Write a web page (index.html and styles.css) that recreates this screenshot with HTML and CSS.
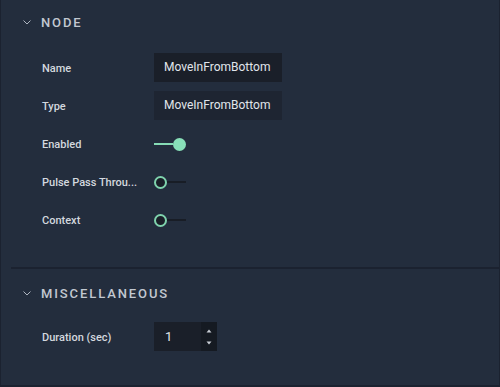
FILE: index.html
```html
<!DOCTYPE html>
<html lang="en">
<head>
    <meta charset="UTF-8">
    <meta name="viewport" content="width=device-width, initial-scale=1.0">
    <title>Node properties</title>
    <link rel="stylesheet" href="styles.css">
</head>
<body>

<div class="panel">

    <!-- Node section -->
    <section class="section node-section">
        <div class="section-header">
            <svg class="chevron" width="8" height="5" viewBox="0 0 8 5"><path d="M0.5 0.5 L4 4 L7.5 0.5" fill="none" stroke="#aeb5c0" stroke-width="1"/></svg>
            <span class="section-title">NODE</span>
        </div>

        <div class="row">
            <label class="row-label">Name</label>
            <div class="text-field">MoveInFromBottom</div>
        </div>

        <div class="row">
            <label class="row-label">Type</label>
            <div class="text-field readonly">MoveInFromBottom</div>
        </div>

        <div class="row">
            <label class="row-label">Enabled</label>
            <div class="toggle on"><span class="track"></span><span class="knob"></span></div>
        </div>

        <div class="row">
            <label class="row-label">Pulse Pass Throu...</label>
            <div class="toggle"><span class="knob"></span><span class="track"></span></div>
        </div>

        <div class="row">
            <label class="row-label">Context</label>
            <div class="toggle"><span class="knob"></span><span class="track"></span></div>
        </div>
    </section>

    <!-- Miscellaneous section -->
    <section class="section misc-section">
        <div class="section-header">
            <svg class="chevron" width="8" height="5" viewBox="0 0 8 5"><path d="M0.5 0.5 L4 4 L7.5 0.5" fill="none" stroke="#aeb5c0" stroke-width="1"/></svg>
            <span class="section-title">MISCELLANEOUS</span>
        </div>

        <div class="row">
            <label class="row-label">Duration (sec)</label>
            <div class="number-field">
                <span class="number-value">1</span>
                <div class="spinner">
                    <svg width="6" height="4" viewBox="0 0 6 4"><path d="M0.5 3.5 L3 0.5 L5.5 3.5 Z" fill="#c9ced6"/></svg>
                    <svg width="6" height="4" viewBox="0 0 6 4"><path d="M0.5 0.5 L3 3.5 L5.5 0.5 Z" fill="#c9ced6"/></svg>
                </div>
            </div>
        </div>
    </section>

</div>

</body>
</html>
```

FILE: styles.css
```css
/* General Styling */
body {
    margin: 0;
    padding: 0;
    background-color: #232d3d;
    font-family: Roboto, "Noto Sans", sans-serif;
    color: #d3d8df;
}

/* Panel */
.panel {
    height: 387px;
    box-sizing: border-box;
    border-left: 1px solid #1b2230;
    border-right: 1px solid #1b2230;
    border-bottom: 2px solid #1b2230;
}

/* Sections */
.node-section {
    padding: 12px 0 24px;
    border-bottom: 2px solid #1b2230;
    margin-left: 10px;
}

.node-section .section-header {
    margin-left: -10px;
}

.misc-section {
    padding-top: 14px;
}

.section-header {
    display: flex;
    align-items: center;
    height: 20px;
    padding-left: 22px;
    margin-bottom: 21px;
}

.misc-section .section-header {
    margin-bottom: 19px;
}

.chevron {
    margin-right: 10px;
}

.section-title {
    font-size: 13px;
    font-weight: 500;
    letter-spacing: 1.9px;
    color: #c2c8d1;
}

/* Rows */
.row {
    display: flex;
    align-items: center;
    height: 29px;
    margin-bottom: 9px;
    padding-left: 41px;
}

.node-section .row {
    padding-left: 31px;
}

.row-label {
    width: 112px;
    padding-top: 2px;
    font-size: 11px;
    font-weight: 500;
    color: #d3d8df;
    white-space: nowrap;
}

/* Text fields */
.text-field {
    width: 128px;
    height: 29px;
    box-sizing: border-box;
    padding-left: 10px;
    background: #1a1f29;
    font-size: 12px;
    line-height: 29px;
    color: #e1e5eb;
    white-space: nowrap;
    overflow: hidden;
}

.text-field.readonly {
    background: #1e2532;
}

/* Toggles */
.toggle {
    display: flex;
    align-items: center;
    width: 32px;
    height: 16px;
    padding-top: 1px;
}

.toggle .track {
    flex: 1;
    height: 2px;
    background: #181d26;
}

.toggle .knob {
    width: 9px;
    height: 9px;
    border: 2px solid #7fd3ad;
    border-radius: 50%;
    background: #1a1f28;
}

.toggle.on .track {
    background: #86dcb6;
}

.toggle.on .knob {
    width: 13px;
    height: 13px;
    border: none;
    background: #88e0b9;
}

/* Number field */
.number-field {
    display: flex;
    width: 63px;
    height: 29px;
    background: #1a1f29;
}

.number-value {
    flex: 1;
    padding-left: 11px;
    font-size: 13px;
    line-height: 29px;
    color: #e1e5eb;
}

.spinner {
    width: 16px;
    display: flex;
    flex-direction: column;
    align-items: center;
    justify-content: space-between;
    padding: 7px 0 6px;
    box-sizing: border-box;
    background: #151a22;
}
```
